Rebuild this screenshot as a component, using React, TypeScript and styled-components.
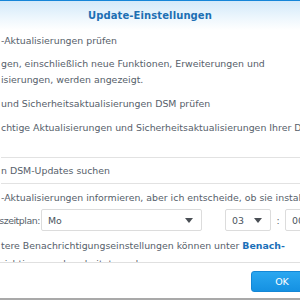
import styled, { createGlobalStyle } from "styled-components";

const Global = createGlobalStyle`
  html, body {
    margin: 0;
    padding: 0;
    background: #ffffff;
  }
  body {
    font-family: "DejaVu Sans", Verdana, sans-serif;
  }
`;

const Dialog = styled.div`
  width: 300px;
  height: 300px;
  overflow: hidden;
  display: flex;
  flex-direction: column;
  background: #fff;
  border-top: 1px solid #1585d8;
  box-sizing: border-box;
`;

const Header = styled.div`
  height: 29px;
  flex: none;
  display: flex;
  align-items: center;
  justify-content: center;
  background: linear-gradient(to bottom, #d3e9f9 0%, #eef7fd 60%, #ffffff 100%);
`;

const Title = styled.h1`
  margin: 0;
  font-size: 10px;
  font-weight: bold;
  color: #1d6fb3;
  letter-spacing: 0.1px;
`;

const Body = styled.div`
  height: 232px;
  flex: none;
  overflow: hidden;
  padding: 3px 0 0 1px;
  box-sizing: border-box;
`;

const Section = styled.div<{ $top?: number; $bottom?: number; $line?: boolean }>`
  padding-top: ${(p) => p.$top ?? 0}px;
  padding-bottom: ${(p) => p.$bottom ?? 0}px;
  border-bottom: ${(p) => (p.$line ? "1px solid #e2e2e2" : "none")};
`;

const Line = styled.div<{ $gap?: number; $lh?: number }>`
  margin-top: ${(p) => p.$gap ?? 0}px;
  font-size: 9.4px;
  line-height: ${(p) => p.$lh ?? 16}px;
  color: #56606a;
  white-space: nowrap;
`;

const Link = styled.span`
  color: #1b6fb8;
  font-weight: bold;
`;

const FormRow = styled.div`
  margin-top: 3px;
  height: 22px;
  display: flex;
  align-items: center;
  font-size: 9.4px;
  color: #56606a;
  white-space: nowrap;
`;

const Label = styled.div`
  width: 40px;
  flex: none;
  display: flex;
  justify-content: flex-end;
  overflow: hidden;
  letter-spacing: -0.45px;
  margin-left: -1px;
  margin-right: 1px;
`;

const Select = styled.div<{ $width: number }>`
  width: ${(p) => p.$width}px;
  height: 22px;
  flex: none;
  box-sizing: border-box;
  border: 1px solid #dcdcdc;
  border-radius: 2px;
  background: #fff;
  display: flex;
  align-items: center;
  justify-content: space-between;
  padding: 0 8px 0 6px;
  font-size: 9.4px;
  color: #4b545d;
`;

const Arrow = styled.span`
  width: 0;
  height: 0;
  border-left: 4px solid transparent;
  border-right: 4px solid transparent;
  border-top: 5px solid #4a4f55;
`;

const Spacer = styled.span`
  width: 23px;
  flex: none;
`;

const Colon = styled.span`
  width: 14px;
  flex: none;
  text-align: center;
`;

const Footer = styled.div`
  flex: 1;
  border-top: 1px solid #e0e0e0;
  border-bottom: 2px solid #a9a9a9;
  display: flex;
  justify-content: flex-end;
  align-items: flex-start;
  padding-top: 8px;
`;

const Button = styled.button`
  width: 62px;
  height: 21px;
  margin-right: -13px;
  flex: none;
  border: 1px solid #1487d6;
  border-radius: 3px;
  background: linear-gradient(to bottom, #2aa7f0, #1591e2);
  color: #fff;
  font-family: "DejaVu Sans", Verdana, sans-serif;
  font-size: 9.5px;
  padding: 0;
  text-align: center;
`;

export default function App() {
  return (
    <>
      <Global />
      <Dialog>
        <Header>
          <Title>Update-Einstellungen</Title>
        </Header>
        <Body>
          <Section $bottom={21} $line>
            <Line>-Aktualisierungen prüfen</Line>
            <Line $gap={7}>gen, einschließlich neue Funktionen, Erweiterungen und</Line>
            <Line>isierungen, werden angezeigt.</Line>
            <Line $gap={8}>und Sicherheitsaktualisierungen DSM prüfen</Line>
            <Line $gap={8}>chtige Aktualisierungen und Sicherheitsaktualisierungen Ihrer DSM</Line>
          </Section>
          <Section $top={5} $bottom={4} $line>
            <Line>n DSM-Updates suchen</Line>
          </Section>
          <Section $top={6}>
            <Line>-Aktualisierungen informieren, aber ich entscheide, ob sie installiert werden</Line>
            <FormRow>
              <Label>Aktualisierungszeitplan:</Label>
              <Select $width={161}>
                Mo
                <Arrow />
              </Select>
              <Spacer />
              <Select $width={46}>
                03
                <Arrow />
              </Select>
              <Colon>:</Colon>
              <Select $width={46}>
                00
                <Arrow />
              </Select>
            </FormRow>
            <Line $gap={6} $lh={18}>
              tere Benachrichtigungseinstellungen können unter <Link>Benach-</Link>
            </Line>
            <Line $lh={18}>richtigungen bearbeitet werden.</Line>
          </Section>
        </Body>
        <Footer>
          <Button>OK</Button>
        </Footer>
      </Dialog>
    </>
  );
}
